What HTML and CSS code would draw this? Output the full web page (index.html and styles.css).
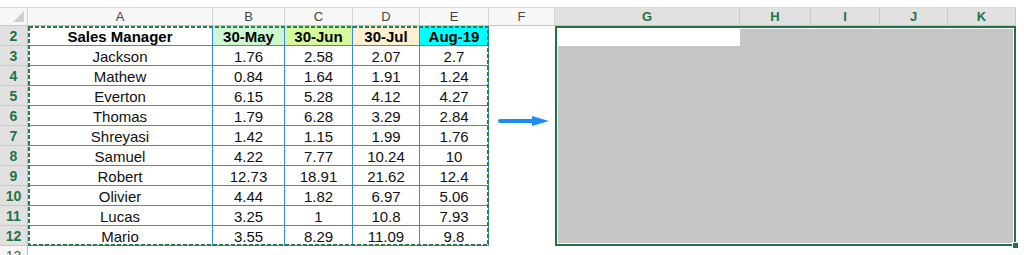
FILE: index.html
```html
<!DOCTYPE html>
<html>
<head>
<meta charset="utf-8">
<link rel="stylesheet" href="styles.css">
</head>
<body>
<div class="sheet">
  <div class="ch corner"><span class="tri"></span></div>
  <div class="ch">A</div>
  <div class="ch">B</div>
  <div class="ch">C</div>
  <div class="ch">D</div>
  <div class="ch">E</div>
  <div class="ch">F</div>
  <div class="ch sel">G</div>
  <div class="ch sel">H</div>
  <div class="ch sel">I</div>
  <div class="ch sel">J</div>
  <div class="ch sel">K</div>

  <div class="rh">2</div>
  <div class="rh">3</div>
  <div class="rh">4</div>
  <div class="rh">5</div>
  <div class="rh">6</div>
  <div class="rh">7</div>
  <div class="rh">8</div>
  <div class="rh">9</div>
  <div class="rh">10</div>
  <div class="rh">11</div>
  <div class="rh">12</div>
  <div class="rh plain">13</div>
  <div class="blank"></div>

  <div class="tbl">
    <div class="c h">Sales Manager</div>
    <div class="c h may">30-May</div>
    <div class="c h jun">30-Jun</div>
    <div class="c h jul">30-Jul</div>
    <div class="c h aug">Aug-19</div>

    <div class="c">Jackson</div><div class="c">1.76</div><div class="c">2.58</div><div class="c">2.07</div><div class="c">2.7</div>
    <div class="c">Mathew</div><div class="c">0.84</div><div class="c">1.64</div><div class="c">1.91</div><div class="c">1.24</div>
    <div class="c">Everton</div><div class="c">6.15</div><div class="c">5.28</div><div class="c">4.12</div><div class="c">4.27</div>
    <div class="c">Thomas</div><div class="c">1.79</div><div class="c">6.28</div><div class="c">3.29</div><div class="c">2.84</div>
    <div class="c">Shreyasi</div><div class="c">1.42</div><div class="c">1.15</div><div class="c">1.99</div><div class="c">1.76</div>
    <div class="c">Samuel</div><div class="c">4.22</div><div class="c">7.77</div><div class="c">10.24</div><div class="c">10</div>
    <div class="c">Robert</div><div class="c">12.73</div><div class="c">18.91</div><div class="c">21.62</div><div class="c">12.4</div>
    <div class="c">Olivier</div><div class="c">4.44</div><div class="c">1.82</div><div class="c">6.97</div><div class="c">5.06</div>
    <div class="c">Lucas</div><div class="c">3.25</div><div class="c">1</div><div class="c">10.8</div><div class="c">7.93</div>
    <div class="c">Mario</div><div class="c">3.55</div><div class="c">8.29</div><div class="c">11.09</div><div class="c">9.8</div>

    <svg class="marquee" width="461" height="220" viewBox="0 0 461 220">
      <rect x="1" y="1" width="459" height="218" fill="none" stroke="#2f7a4c" stroke-width="2" stroke-dasharray="4 2"/>
    </svg>
  </div>

  <div class="fcol">
    <svg width="66" height="220" viewBox="0 0 66 220">
      <line x1="11" y1="95" x2="45" y2="95" stroke="#1b8cf5" stroke-width="4" stroke-linecap="round"/>
      <polygon points="43,90 60,95 43,100" fill="#1b8cf5"/>
    </svg>
  </div>

  <div class="selection">
    <div class="fill"><div class="active"></div></div>
    <span class="handle"></span>
  </div>
</div>
</body>
</html>
```
FILE: styles.css
```css
* { box-sizing: border-box; }
html, body { margin: 0; padding: 0; }
body {
  background: #fff;
  font-family: "Liberation Sans", Arial, sans-serif;
  height: 255px;
  overflow: hidden;
}
.sheet {
  display: grid;
  grid-template-columns: 28px 185px 72px 68px 67px 69px 66px 185px 71px 69px 68px 68px;
  grid-template-rows: 19px repeat(11, 20px) 20px;
  width: 1016px;
  margin-top: 7px;
}
.ch {
  background: #f7f7f7;
  border-top: 1px solid #dadada;
  border-right: 1px solid #d4d4d4;
  border-bottom: 1px solid #c4c4c4;
  color: #444;
  font-size: 13px;
  display: flex;
  align-items: center;
  justify-content: center;
}
.ch.sel {
  background: #e1e1e1;
  color: #217346;
  font-weight: bold;
  border-right-color: #c8c8c8;
}
.corner {
  justify-content: flex-end;
  align-items: flex-end;
  padding: 0 3px 3px 0;
}
.tri {
  width: 0;
  height: 0;
  border-left: 11px solid transparent;
  border-bottom: 11px solid #d0d0d0;
}
.rh {
  grid-column: 1;
  background: #e1e1e1;
  color: #217346;
  font-weight: bold;
  font-size: 14px;
  border-bottom: 1px solid #c9c9c9;
  border-right: 1px solid #bdbdbd;
  display: flex;
  align-items: center;
  justify-content: center;
  padding-top: 1px;
}
.rh.plain {
  background: #f7f7f7;
  color: #555;
  font-weight: normal;
}
.blank {
  grid-column: 2 / 13;
  background: #fff;
}
.tbl {
  grid-column: 2 / 7;
  grid-row: 2 / 13;
  position: relative;
  display: grid;
  grid-template-columns: 185px 72px 68px 67px 69px;
  grid-template-rows: repeat(11, 20px);
}
.tbl .c {
  border-right: 1px solid #3b8bdd;
  border-bottom: 1px solid #3b8bdd;
  display: flex;
  align-items: center;
  justify-content: center;
  font-size: 15px;
  color: #111;
  padding-top: 1px;
}
.tbl .h { font-weight: bold; color: #000; }
.tbl .may { background: #ccf7cf; }
.tbl .jun { background: #d5f99d; }
.tbl .jul { background: #fdefcf; }
.tbl .aug { background: #00ffff; }
.marquee {
  position: absolute;
  left: 0;
  top: 0;
  pointer-events: none;
}
.fcol {
  grid-column: 7;
  grid-row: 2 / 13;
  background: #fff;
}
.fcol svg { display: block; }
.selection {
  grid-column: 8 / 13;
  grid-row: 2 / 13;
  position: relative;
  border: 2px solid #217346;
  padding: 1px;
  background: #fff;
}
.fill {
  background: #c6c6c6;
  height: 100%;
}
.active {
  width: 182px;
  height: 17px;
  background: #fff;
}
.handle {
  position: absolute;
  right: -5px;
  bottom: -5px;
  width: 7px;
  height: 7px;
  background: #217346;
  border: 1px solid #fff;
}
```
